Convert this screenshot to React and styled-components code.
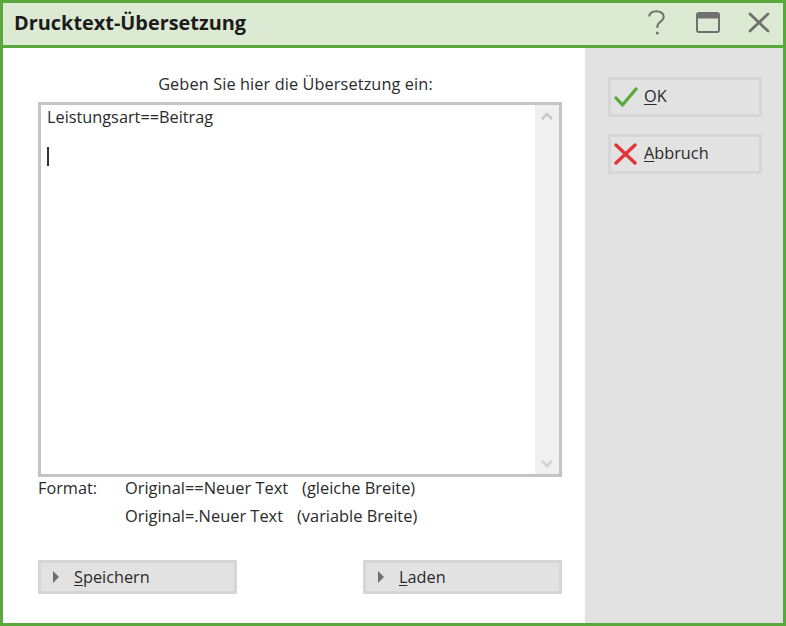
import React from 'react';
import styled, { createGlobalStyle } from 'styled-components';

const GlobalStyle = createGlobalStyle`
  html, body {
    margin: 0;
    padding: 0;
    background: #fff;
  }
  * {
    box-sizing: border-box;
  }
`;

const Window = styled.div`
  width: 786px;
  height: 626px;
  border: 3px solid #5aa83c;
  display: flex;
  flex-direction: column;
  font-family: "Open Sans", sans-serif;
  font-size: 16.3px;
  color: #2a2a2a;
  overflow: hidden;
`;

const TitleBar = styled.div`
  height: 45px;
  flex: none;
  display: flex;
  align-items: center;
  padding: 0 11px;
  background: #dce9d3;
  border-bottom: 3px solid #5aa83c;
`;

const Title = styled.div`
  flex: 1;
  font-size: 19.9px;
  font-weight: 700;
  color: #1c1c1c;
  margin-top: -3px;
`;

const TitleIcons = styled.div`
  display: flex;
  align-items: center;
  margin-right: 2px;
  margin-top: -3px;
`;

const TitleIcon = styled.span`
  display: flex;
  margin-left: ${(p) => p.$gap}px;
`;

const Body = styled.div`
  flex: 1;
  display: flex;
  min-height: 0;
`;

const Main = styled.div`
  flex: 1;
  background: #fff;
  padding: 26px 23px 0 35px;
  display: flex;
  flex-direction: column;
`;

const Prompt = styled.div`
  text-align: center;
  line-height: 20px;
  height: 28px;
  padding-right: 9px;
  letter-spacing: 0.11px;
`;

const TextBox = styled.div`
  height: 375px;
  border: 3px solid #c4c4c4;
  display: flex;
  background: #fff;
`;

const TextContent = styled.div`
  flex: 1;
  padding: 2px 0 0 6px;
`;

const TextLine = styled.div`
  line-height: 20px;
`;

const Caret = styled.div`
  width: 2px;
  height: 19px;
  margin: 20px 0 0 0;
  background: #333;
`;

const ScrollBar = styled.div`
  width: 24px;
  background: #f0f0f0;
  display: flex;
  flex-direction: column;
  justify-content: space-between;
  align-items: center;
  padding: 7px 0 6px;
`;

const FormatGrid = styled.div`
  display: grid;
  grid-template-columns: 87px 1fr;
  row-gap: 8px;
  margin-top: 1px;
  line-height: 20px;
`;

const FormatRow = styled.div`
  display: flex;
  gap: 14px;
  font-size: 16.4px;
`;

const ActionRow = styled.div`
  display: flex;
  justify-content: space-between;
  margin-top: 34px;
`;

const ActionButton = styled.div`
  width: 199px;
  height: 34px;
  background: #e2e2e2;
  border: 3px solid #d6d6d6;
  display: flex;
  align-items: center;
  padding-left: 12px;
  gap: 15px;
`;

const Arrow = styled.span`
  width: 0;
  height: 0;
  border-left: 6px solid #6e6e6e;
  border-top: 6.5px solid transparent;
  border-bottom: 6.5px solid transparent;
`;

const Key = styled.span`
  text-decoration: underline;
  text-underline-offset: 2px;
`;

const Side = styled.div`
  width: 198px;
  flex: none;
  background: #e2e2e2;
  padding: 29px 0 0 23px;
  display: flex;
  flex-direction: column;
  gap: 17px;
`;

const SideButton = styled.div`
  width: 154px;
  height: 40px;
  border: 3px solid #d6d6d6;
  display: flex;
  align-items: center;
  padding-left: 2px;
  gap: 6px;
  line-height: 20px;
`;

const SideLabel = styled.span`
  margin-bottom: 2px;
`;

const SideIcon = styled.span`
  display: flex;
  width: 25px;
  justify-content: center;
`;

const HelpIcon = () => (
  <svg width="17" height="25" viewBox="0 0 17 25" fill="none" stroke="#707070" strokeWidth="2">
    <path d="M1.2 6.5C1.2 3.2 4.4 1.2 8.3 1.2s7.4 2.1 7.4 5.6c0 2.5-1.6 3.8-3.3 5-1.8 1.3-3 2.4-3 4.8v1.4" />
    <circle cx="9.3" cy="23" r="1.5" fill="#707070" stroke="none" />
  </svg>
);

const MaximizeIcon = () => (
  <svg width="24" height="21" viewBox="0 0 24 21" fill="none">
    <rect x="1" y="1" width="22" height="19" rx="2" stroke="#707070" strokeWidth="2" />
    <rect x="1" y="1" width="22" height="5.5" fill="#707070" />
  </svg>
);

const CloseIcon = () => (
  <svg width="22" height="21" viewBox="0 0 22 21" fill="none" stroke="#707070" strokeWidth="2.8" strokeLinecap="round">
    <path d="M2 2l18 17M20 2L2 19" />
  </svg>
);

const CheckIcon = () => (
  <svg width="24" height="20" viewBox="0 0 24 20" fill="none" stroke="#5aa83c" strokeWidth="3.2" strokeLinecap="round" strokeLinejoin="round">
    <path d="M2 11l6.5 7L22 2" />
  </svg>
);

const CrossIcon = () => (
  <svg width="23" height="22" viewBox="0 0 23 22" fill="none" stroke="#e0353a" strokeWidth="3.4" strokeLinecap="round">
    <path d="M2 2l19 18M21 2L2 20" />
  </svg>
);

const ChevronIcon = ({ down }) => (
  <svg width="14" height="9" viewBox="0 0 14 9" fill="none" stroke={down ? '#d2d2d2' : '#c8c8c8'} strokeWidth="2.6">
    <path d={down ? 'M2 2l5 5 5-5' : 'M2 7l5-5 5 5'} />
  </svg>
);

const App = () => {
  return (
    <>
      <GlobalStyle />
      <Window>
        <TitleBar>
          <Title>Drucktext-Übersetzung</Title>
          <TitleIcons>
            <TitleIcon $gap={0}><HelpIcon /></TitleIcon>
            <TitleIcon $gap={31}><MaximizeIcon /></TitleIcon>
            <TitleIcon $gap={28}><CloseIcon /></TitleIcon>
          </TitleIcons>
        </TitleBar>
        <Body>
          <Main>
            <Prompt>Geben Sie hier die Übersetzung ein:</Prompt>
            <TextBox>
              <TextContent>
                <TextLine>Leistungsart==Beitrag</TextLine>
                <Caret />
              </TextContent>
              <ScrollBar>
                <ChevronIcon />
                <ChevronIcon down />
              </ScrollBar>
            </TextBox>
            <FormatGrid>
              <span>Format:</span>
              <FormatRow>
                <span>Original==Neuer Text</span>
                <span>(gleiche Breite)</span>
              </FormatRow>
              <span />
              <FormatRow>
                <span>Original=.Neuer Text</span>
                <span>(variable Breite)</span>
              </FormatRow>
            </FormatGrid>
            <ActionRow>
              <ActionButton>
                <Arrow />
                <span><Key>S</Key>peichern</span>
              </ActionButton>
              <ActionButton>
                <Arrow />
                <span><Key>L</Key>aden</span>
              </ActionButton>
            </ActionRow>
          </Main>
          <Side>
            <SideButton>
              <SideIcon><CheckIcon /></SideIcon>
              <SideLabel><Key>O</Key>K</SideLabel>
            </SideButton>
            <SideButton>
              <SideIcon><CrossIcon /></SideIcon>
              <SideLabel><Key>A</Key>bbruch</SideLabel>
            </SideButton>
          </Side>
        </Body>
      </Window>
    </>
  );
};

export default App;
